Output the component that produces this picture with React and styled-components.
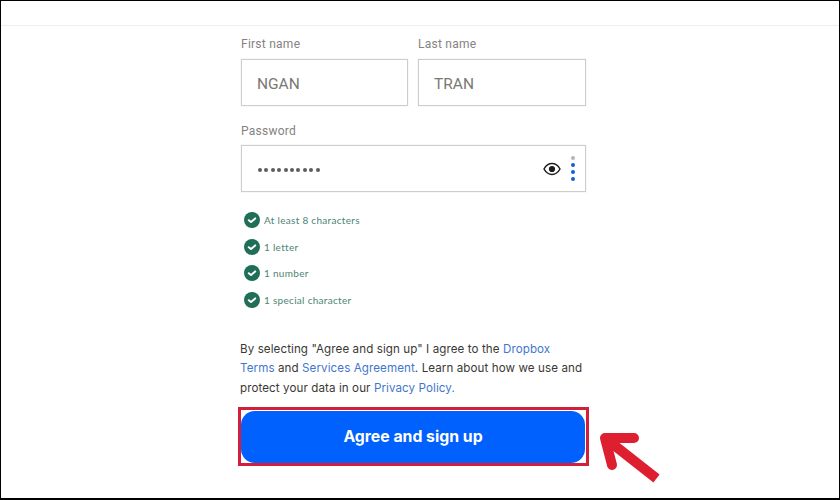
import React from 'react';
import styled, { createGlobalStyle } from 'styled-components';

const Global = createGlobalStyle`
    html, body {
        margin: 0;
        padding: 0;
        background: #fff;
    }
`

const Frame = styled.div`
    position: relative;
    box-sizing: border-box;
    width: 840px;
    height: 500px;
    overflow: hidden;
    background: #fff;
    border: 1px solid #000;
    border-bottom-width: 2px;
    font-family: 'Roboto', 'Liberation Sans', sans-serif;
`

const TopBar = styled.div`
    height: 24px;
    border-bottom: 1px solid #eeeeee;
`

const Form = styled.div`
    width: 345px;
    margin-left: 240px;
    display: flex;
    flex-direction: column;
`

const NameRow = styled.div`
    display: flex;
    gap: 10px;
    padding-top: 11px;
`

const Field = styled.div`
    display: flex;
    flex-direction: column;
    flex: ${p => p.$w ? `0 0 ${p.$w}px` : 1};
    margin-top: ${p => p.$top || 0}px;
`

const Label = styled.label`
    font-size: 12px;
    line-height: 14px;
    letter-spacing: 0.25px;
    color: #85827f;
    margin-bottom: ${p => p.$gap || 8}px;
`

const InputBox = styled.div`
    box-sizing: border-box;
    height: 47px;
    border: 1px solid #cfcdcb;
    box-shadow: 0 0 1px #d8d6d4;
    padding: 0 10px 0 15px;
    display: flex;
    align-items: center;
    justify-content: space-between;
    font-size: 15.5px;
    color: #7a7874;
`

const InputText = styled.span`
    margin-top: 2px;
`

const Dots = styled.span`
    display: flex;
    gap: 2.4px;
    margin: 3px 0 0 1px;
    i {
        width: 4px;
        height: 4px;
        border-radius: 50%;
        background: #5f5d5a;
    }
`

const PwTools = styled.div`
    display: flex;
    align-items: center;
    gap: 10px;
`

const Kebab = styled.div`
    display: flex;
    flex-direction: column;
    gap: 3px;
    i {
        width: 4px;
        height: 4px;
        border-radius: 50%;
        background: #0f62d6;
    }
    i:first-child {
        background: #b5b5b5;
    }
`

const Checks = styled.ul`
    list-style: none;
    margin: 20px 0 0 3px;
    padding: 0;
    display: flex;
    flex-direction: column;
    gap: 10.6px;
`

const CheckItem = styled.li`
    display: flex;
    align-items: center;
    gap: 4px;
    height: 16px;
    font-size: 10px;
    letter-spacing: 0.3px;
    color: #4d8573;
    font-family: 'Lato', 'Roboto', sans-serif;
`

const Legal = styled.p`
    margin: 32px 0 0 -1px;
    font-size: 11.6px;
    line-height: 19.7px;
    color: #3a3836;
    letter-spacing: 0.09px;
    white-space: nowrap;
    font-family: 'Inter', 'Roboto', sans-serif;
    a {
        color: #3f76cf;
        text-decoration: none;
    }
`

const Highlight = styled.div`
    box-sizing: border-box;
    width: 351px;
    height: 59px;
    margin: 8px 0 0 -3px;
    padding: 1px 1px 0 0;
    border: 3px solid #d3203a;
`

const SignUp = styled.button`
    display: block;
    width: 100%;
    height: 100%;
    border: 0;
    border-radius: 14px;
    background: #0061fe;
    color: #fff;
    font-family: 'Inter', 'Liberation Sans', sans-serif;
    font-size: 15.8px;
    font-weight: 700;
    padding: 0;
`

const Arrow = styled.svg`
    position: absolute;
    left: 590px;
    top: 425px;
`

const CheckIcon = () => (
    <svg width="16" height="16" viewBox="0 0 16 16" aria-hidden="true">
        <circle cx="8" cy="8" r="8" fill="#1f6e58" />
        <path d="M4.800 8.200 7 10 11.200 6.400" fill="none" stroke="#fff" strokeWidth="2" strokeLinecap="round" strokeLinejoin="round" />
    </svg>
)

const EyeIcon = () => (
    <svg width="18" height="14" viewBox="0 0 18 14" aria-hidden="true">
        <path d="M1 7C3 3.400 5.800 1.600 9 1.600S15 3.400 17 7C15 10.600 12.200 12.400 9 12.400S3 10.600 1 7Z" fill="none" stroke="#1c1c1c" strokeWidth="1.5" />
        <circle cx="9" cy="7" r="3.100" fill="#1c1c1c" />
    </svg>
)

const rules = ['At least 8 characters', '1 letter', '1 number', '1 special character']

const App = () => (
    <Frame>
        <Global />
        <TopBar />
        <Form>
            <NameRow>
                <Field $w={167}>
                    <Label>First name</Label>
                    <InputBox><InputText>NGAN</InputText></InputBox>
                </Field>
                <Field>
                    <Label>Last name</Label>
                    <InputBox><InputText>TRAN</InputText></InputBox>
                </Field>
            </NameRow>
            <Field $top={18}>
                <Label $gap={7}>Password</Label>
                <InputBox>
                    <Dots>{Array.from({ length: 10 }).map((_, i) => <i key={i} />)}</Dots>
                    <PwTools>
                        <EyeIcon />
                        <Kebab><i /><i /><i /><i /></Kebab>
                    </PwTools>
                </InputBox>
            </Field>
            <Checks>
                {rules.map(r => (
                    <CheckItem key={r}><CheckIcon />{r}</CheckItem>
                ))}
            </Checks>
            <Legal>
                By selecting "Agree and sign up" I agree to the <a href="#">Dropbox</a><br />
                <a href="#">Terms</a> and <a href="#">Services Agreement</a>. Learn about how we use and<br />
                protect your data in our <a href="#">Privacy Policy.</a>
            </Legal>
            <Highlight>
                <SignUp>Agree and sign up</SignUp>
            </Highlight>
        </Form>
        <Arrow width="80" height="65" viewBox="0 0 80 65" aria-hidden="true">
            <path d="M14 12H43M14 12 21 39" fill="none" stroke="#dd1f30" strokeWidth="10" strokeLinecap="round" strokeLinejoin="round" />
            <path d="M14 12 65.500 52.500" fill="none" stroke="#dd1f30" strokeWidth="10" />
        </Arrow>
    </Frame>
)

export default App
